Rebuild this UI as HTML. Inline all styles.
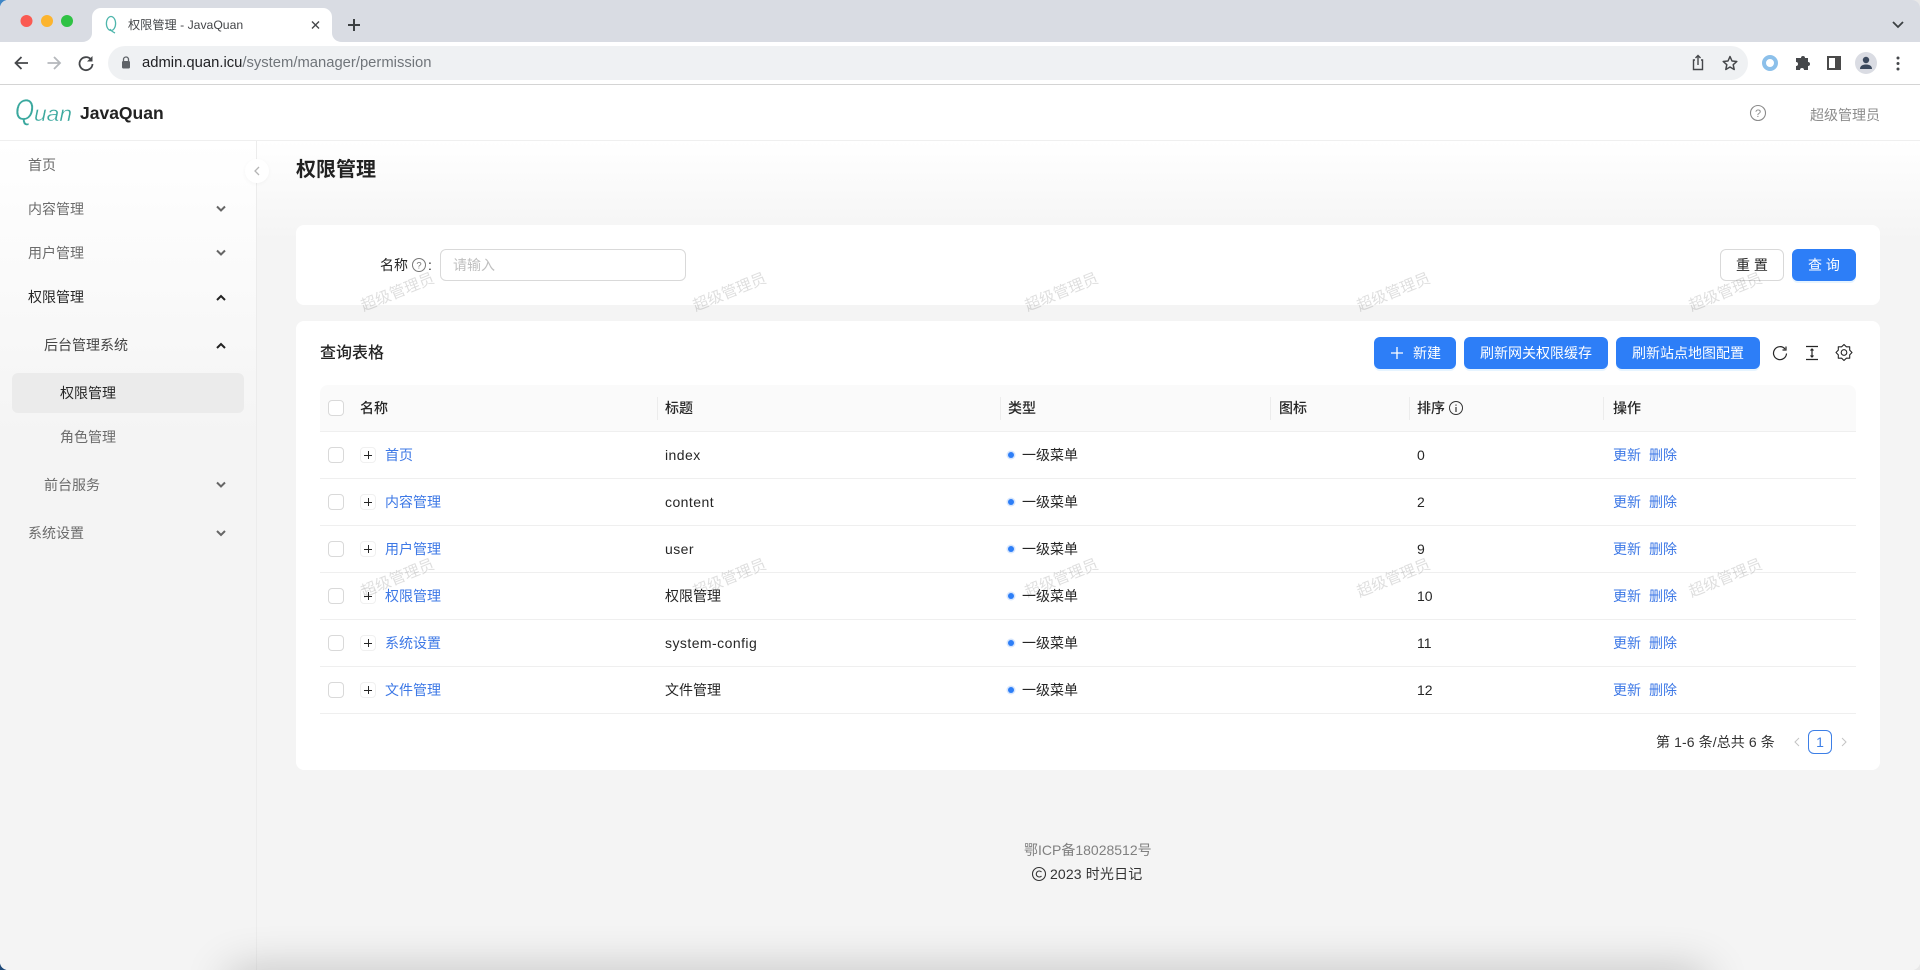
<!DOCTYPE html>
<html lang="zh-CN">
<head>
<meta charset="utf-8">
<title>权限管理 - JavaQuan</title>
<style>
*{box-sizing:border-box;margin:0;padding:0}
html,body{width:1920px;height:970px;overflow:hidden;background:#e8e8e8}
body{position:relative;font-family:"Liberation Sans","Noto Sans CJK SC",sans-serif;font-size:14px;color:#262626}
.c{position:absolute;width:10px;height:10px}
#win{position:absolute;left:0;top:0;width:1920px;height:970px;border-radius:8px;overflow:hidden;background:#f4f4f4}
.a{position:absolute}
.t{position:absolute;white-space:nowrap;line-height:20px;height:20px}
.btn{position:absolute;height:32px;border-radius:6px;background:#2d7ef7;color:#fff;text-align:center;line-height:32px;box-shadow:0 2px 0 rgba(5,145,255,.1);white-space:nowrap}
.nav{color:#6b6b6b}
.lnk{color:#3d78e6}
.ls{letter-spacing:.45px}
.sep{position:absolute;width:1px;height:23px;top:397px;background:#ececec}
.line{position:absolute;left:320px;width:1536px;height:1px;background:#efefef}
.cb{position:absolute;left:328px;width:16px;height:16px;border:1px solid #d9d9d9;border-radius:4px;background:#fff}
.ex{position:absolute;left:360px;width:16px;height:16px;border:1px solid #f0f0f0;border-radius:4px;background:#fff}
.ex:before{content:"";position:absolute;left:3px;top:6.5px;width:8px;height:1px;background:#262626}
.ex:after{content:"";position:absolute;left:6.5px;top:3px;width:1px;height:8px;background:#262626}
.dot{position:absolute;left:1008px;width:6px;height:6px;border-radius:50%;background:#2d7ef7;box-shadow:0 0 0 1.5px rgba(45,126,247,.2)}
.th{font-weight:500;color:#262626}
.wm{position:absolute;width:90px;height:24px;line-height:24px;text-align:center;font-size:15.5px;color:rgba(0,0,0,.13);transform:rotate(-22deg);white-space:nowrap;pointer-events:none}
svg.ic{position:absolute;left:0;top:0;width:1920px;height:970px;pointer-events:none}
</style>
</head>
<body>
<div class="c" style="left:0;top:0;background:#3f86c6"></div>
<div class="c" style="left:0;bottom:0;background:#1f4a7a"></div>
<div id="win">
  <!-- browser chrome -->
  <div class="a" style="left:0;top:0;width:1920px;height:42px;background:#d9dce3"></div>
  <div class="a" style="left:92px;top:8px;width:240px;height:34px;background:#fff;border-radius:9px 9px 0 0"></div>
  <div class="a" style="left:0;top:42px;width:1920px;height:42px;background:#fff"></div>
  <div class="a" style="left:0;top:84px;width:1920px;height:1px;background:#d4d4d4"></div>
  <div class="a" style="left:108px;top:46px;width:1640px;height:34px;border-radius:17px;background:#eff1f3"></div>
  <div class="t" style="left:128px;top:15px;font-size:12.2px;color:#45474a">权限管理 - JavaQuan</div>
  <div class="t" style="left:142px;top:53px;font-size:14.8px;color:#70757a"><span style="color:#202124">admin.quan.icu</span>/system/manager/permission</div>

  <!-- app header -->
  <div class="a" style="left:0;top:85px;width:1920px;height:55px;background:#fff"></div>
  <div class="a" style="left:0;top:140px;width:1920px;height:1px;background:#efefef"></div>
  <svg class="a" style="left:14px;top:96px" width="64" height="36" viewBox="0 0 64 36">
    <g font-family="Liberation Sans" font-style="italic" fill="#3aa89e" stroke="#fff" stroke-width=".35">
      <text transform="translate(1 24) scale(.82 1)" font-size="30">Q</text>
      <text x="20" y="25" font-size="21" textLength="38" lengthAdjust="spacingAndGlyphs">uan</text>
    </g>
  </svg>
  <div class="t" style="left:80px;top:102px;font-size:17.5px;line-height:22px;height:22px;font-weight:600;color:#222">JavaQuan</div>
  <div class="t" style="left:1810px;top:105px;color:#8c8c8c">超级管理员</div>

  <!-- sidebar -->
  <div class="a" style="left:0;top:141px;width:256px;height:829px;background:linear-gradient(#fff 0,#f4f4f4 300px)"></div>
  <div class="a" style="left:256px;top:141px;width:1px;height:829px;background:#ececec"></div>
  <div class="a" style="left:12px;top:373px;width:232px;height:40px;border-radius:6px;background:#ebebeb"></div>
  <div class="t nav" style="left:28px;top:155px">首页</div>
  <div class="t nav" style="left:28px;top:199px">内容管理</div>
  <div class="t nav" style="left:28px;top:243px">用户管理</div>
  <div class="t" style="left:28px;top:287px;color:#262626">权限管理</div>
  <div class="t" style="left:44px;top:335px;color:#444">后台管理系统</div>
  <div class="t" style="left:60px;top:383px;color:#262626">权限管理</div>
  <div class="t nav" style="left:60px;top:427px">角色管理</div>
  <div class="t nav" style="left:44px;top:475px">前台服务</div>
  <div class="t nav" style="left:28px;top:523px">系统设置</div>

  <!-- main -->
  <div class="a" style="left:257px;top:141px;width:1663px;height:829px;background:linear-gradient(#fff 0,#f4f4f4 100px)"></div>
  <div class="t" style="left:296px;top:156px;font-size:20px;line-height:28px;height:28px;font-weight:600;color:#222">权限管理</div>

  <!-- search card -->
  <div class="a" style="left:296px;top:225px;width:1584px;height:80px;border-radius:8px;background:#fff"></div>
  <div class="t" style="left:380px;top:255px;color:#262626">名称</div>
  <div class="t" style="left:428px;top:255px;color:#262626">:</div>
  <div class="a" style="left:440px;top:249px;width:246px;height:32px;border:1px solid #d9d9d9;border-radius:6px;background:#fff"></div>
  <div class="t" style="left:453px;top:255px;color:#bfbfbf">请输入</div>
  <div class="a" style="left:1720px;top:249px;width:64px;height:32px;border:1px solid #d9d9d9;border-radius:6px;background:#fff;text-align:center;line-height:30px;color:#262626">重 置</div>
  <div class="btn" style="left:1792px;top:249px;width:64px">查 询</div>

  <!-- table card -->
  <div class="a" style="left:296px;top:321px;width:1584px;height:449px;border-radius:8px;background:#fff"></div>
  <div class="t" style="left:320px;top:343px;font-size:16px;line-height:22px;height:22px;font-weight:500;color:#222">查询表格</div>
  <div class="btn" style="left:1374px;top:337px;width:82px;padding-left:24px">新建</div>
  <div class="btn" style="left:1464px;top:337px;width:144px">刷新网关权限缓存</div>
  <div class="btn" style="left:1616px;top:337px;width:144px">刷新站点地图配置</div>

  <div class="a" style="left:320px;top:385px;width:1536px;height:46px;border-radius:8px 8px 0 0;background:#fafafa"></div>
  <div class="sep" style="left:657px"></div>
  <div class="sep" style="left:1000px"></div>
  <div class="sep" style="left:1270px"></div>
  <div class="sep" style="left:1409px"></div>
  <div class="sep" style="left:1603px"></div>
  <div class="cb" style="top:400px"></div>
  <div class="t th" style="left:360px;top:398px">名称</div>
  <div class="t th" style="left:665px;top:398px">标题</div>
  <div class="t th" style="left:1008px;top:398px">类型</div>
  <div class="t th" style="left:1279px;top:398px">图标</div>
  <div class="t th" style="left:1417px;top:398px">排序</div>
  <div class="t th" style="left:1613px;top:398px">操作</div>

  <div class="line" style="top:431px"></div>
  <div class="line" style="top:478px"></div>
  <div class="line" style="top:525px"></div>
  <div class="line" style="top:572px"></div>
  <div class="line" style="top:619px"></div>
  <div class="line" style="top:666px"></div>
  <div class="line" style="top:713px"></div>

  <!-- row 1 -->
  <div class="cb" style="top:447px"></div><div class="ex" style="top:447px"></div>
  <div class="t lnk" style="left:385px;top:445px">首页</div>
  <div class="t ls" style="left:665px;top:445px">index</div>
  <div class="dot" style="top:452px"></div><div class="t" style="left:1022px;top:445px">一级菜单</div>
  <div class="t" style="left:1417px;top:445px">0</div>
  <div class="t lnk" style="left:1613px;top:445px">更新</div><div class="t lnk" style="left:1649px;top:445px">删除</div>
  <!-- row 2 -->
  <div class="cb" style="top:494px"></div><div class="ex" style="top:494px"></div>
  <div class="t lnk" style="left:385px;top:492px">内容管理</div>
  <div class="t ls" style="left:665px;top:492px">content</div>
  <div class="dot" style="top:499px"></div><div class="t" style="left:1022px;top:492px">一级菜单</div>
  <div class="t" style="left:1417px;top:492px">2</div>
  <div class="t lnk" style="left:1613px;top:492px">更新</div><div class="t lnk" style="left:1649px;top:492px">删除</div>
  <!-- row 3 -->
  <div class="cb" style="top:541px"></div><div class="ex" style="top:541px"></div>
  <div class="t lnk" style="left:385px;top:539px">用户管理</div>
  <div class="t ls" style="left:665px;top:539px">user</div>
  <div class="dot" style="top:546px"></div><div class="t" style="left:1022px;top:539px">一级菜单</div>
  <div class="t" style="left:1417px;top:539px">9</div>
  <div class="t lnk" style="left:1613px;top:539px">更新</div><div class="t lnk" style="left:1649px;top:539px">删除</div>
  <!-- row 4 -->
  <div class="cb" style="top:588px"></div><div class="ex" style="top:588px"></div>
  <div class="t lnk" style="left:385px;top:586px">权限管理</div>
  <div class="t" style="left:665px;top:586px">权限管理</div>
  <div class="dot" style="top:593px"></div><div class="t" style="left:1022px;top:586px">一级菜单</div>
  <div class="t" style="left:1417px;top:586px">10</div>
  <div class="t lnk" style="left:1613px;top:586px">更新</div><div class="t lnk" style="left:1649px;top:586px">删除</div>
  <!-- row 5 -->
  <div class="cb" style="top:635px"></div><div class="ex" style="top:635px"></div>
  <div class="t lnk" style="left:385px;top:633px">系统设置</div>
  <div class="t ls" style="left:665px;top:633px">system-config</div>
  <div class="dot" style="top:640px"></div><div class="t" style="left:1022px;top:633px">一级菜单</div>
  <div class="t" style="left:1417px;top:633px">11</div>
  <div class="t lnk" style="left:1613px;top:633px">更新</div><div class="t lnk" style="left:1649px;top:633px">删除</div>
  <!-- row 6 -->
  <div class="cb" style="top:682px"></div><div class="ex" style="top:682px"></div>
  <div class="t lnk" style="left:385px;top:680px">文件管理</div>
  <div class="t" style="left:665px;top:680px">文件管理</div>
  <div class="dot" style="top:687px"></div><div class="t" style="left:1022px;top:680px">一级菜单</div>
  <div class="t" style="left:1417px;top:680px">12</div>
  <div class="t lnk" style="left:1613px;top:680px">更新</div><div class="t lnk" style="left:1649px;top:680px">删除</div>

  <!-- pagination -->
  <div class="t" style="left:1656px;top:732px;color:#333;letter-spacing:.1px">第 1-6 条/总共 6 条</div>
  <div class="a" style="left:1808px;top:730px;width:24px;height:24px;border:1px solid #3d7fe6;border-radius:6px;text-align:center;line-height:22px;font-weight:500;color:#3d7fe6;background:#fff">1</div>

  <!-- footer -->
  <div class="t" style="left:1024px;top:840px;color:#808080">鄂ICP备18028512号</div>
  <div class="t" style="left:1050px;top:864px;color:#333;letter-spacing:.15px">2023 时光日记</div>

  <!-- icons -->
  <svg class="ic" viewBox="0 0 1920 970" fill="none">
    <!-- traffic lights -->
    <circle cx="26.5" cy="21" r="6" fill="#fa5a52"/>
    <circle cx="47" cy="21" r="6" fill="#fcb42e"/>
    <circle cx="67" cy="21" r="6" fill="#2fc244"/>
    <!-- tab flares -->
    <path d="M82 42C88 42 92 38 92 33V42Z M332 33C332 38 336 42 342 42H332Z" fill="#fff"/>
    <!-- favicon -->
    <ellipse cx="111" cy="23.5" rx="4.6" ry="7" stroke="#4fb6ac" stroke-width="1.3"/>
    <path d="M110 29C111 31 113 32 115 33" stroke="#4fb6ac" stroke-width="1.3"/>
    <!-- tab close and new tab -->
    <path d="M312 21.500L319 28.500M319 21.500L312 28.500" stroke="#45474a" stroke-width="1.400"/>
    <path d="M348 25H360M354 19V31" stroke="#3c4043" stroke-width="2"/>
    <!-- toolbar -->
    <path d="M28 63H16M21.500 57L15.500 63L21.500 69" stroke="#45474a" stroke-width="1.800"/>
    <path d="M47.500 63H60M54 57L60 63L54 69" stroke="#b5b8bc" stroke-width="1.800"/>
    <path d="M91 59.500A6.500 6.500 0 1 0 92.500 64" stroke="#45474a" stroke-width="1.800"/>
    <path d="M92.500 56V61.500H87Z" fill="#45474a"/>
    <rect x="122" y="61" width="8" height="7.500" rx="1.200" fill="#5f6368"/>
    <path d="M123.500 61V59.500A2.500 2.500 0 0 1 128.500 59.500V61" stroke="#5f6368" stroke-width="1.300"/>
    <path d="M1695 60H1693.500V69.500H1702.500V60H1701M1698 65V55.500M1695.500 58L1698 55.500L1700.500 58" stroke="#45474a" stroke-width="1.400"/>
    <path d="M1730 56.500L1732 61L1736.800 61.500L1733.200 64.700L1734.200 69.500L1730 67L1725.800 69.500L1726.800 64.700L1723.200 61.500L1728 61Z" stroke="#45474a" stroke-width="1.500" stroke-linejoin="round"/>
    <circle cx="1770" cy="63" r="6" stroke="#8cc0ea" stroke-width="4"/>
    <path d="M1798 58H1801A2 2 0 0 1 1805 58H1808V62A2 2 0 0 1 1808 66V70H1804A2 2 0 0 0 1800 70H1796V66A2 2 0 0 0 1796 62V58Z" fill="#45474a"/>
    <rect x="1827" y="56" width="14" height="14" fill="#4a4a4a"/>
    <rect x="1829" y="58" width="6" height="10" fill="#fff"/>
    <circle cx="1866" cy="63" r="11" fill="#dadce3"/>
    <circle cx="1866" cy="60" r="3.200" fill="#3c4a5e"/>
    <path d="M1860 69C1860 65.500 1863 64.500 1866 64.500S1872 65.500 1872 69Z" fill="#3c4a5e"/>
    <circle cx="1898" cy="58" r="1.500" fill="#45474a"/><circle cx="1898" cy="63.500" r="1.500" fill="#45474a"/><circle cx="1898" cy="69" r="1.500" fill="#45474a"/>
    <path d="M1893 22L1898 27L1903 22" stroke="#3c4043" stroke-width="1.800"/>
    <!-- header help -->
    <circle cx="1758" cy="113" r="7.500" stroke="#8c8c8c" stroke-width="1.100"/>
    <text x="1758" y="117" font-family="Liberation Sans" font-size="11" fill="#8c8c8c" text-anchor="middle">?</text>
    <!-- sidebar chevrons -->
    <g stroke="#666" stroke-width="2">
      <path d="M217 206.500L221 210.500L225 206.500"/><path d="M217 250.500L221 254.500L225 250.500"/><path d="M217 482.500L221 486.500L225 482.500"/><path d="M217 531L221 535L225 531"/>
    </g>
    <g stroke="#222" stroke-width="2">
      <path d="M217 300L221 296L225 300"/><path d="M217 348L221 344L225 348"/>
    </g>
    <!-- search label help -->
    <circle cx="419" cy="265" r="6.500" stroke="#777" stroke-width="1"/>
    <text x="419" y="268.500" font-family="Liberation Sans" font-size="9.500" fill="#777" text-anchor="middle">?</text>
    <!-- toolbar plus -->
    <path d="M1391 353H1403M1397 347V359" stroke="#fff" stroke-width="1.300"/>
    <!-- table tools -->
    <path d="M1785 349A6.500 6.500 0 1 0 1786.500 353.500" stroke="#262626" stroke-width="1.200"/>
    <path d="M1786 346.500V350H1782.500" stroke="#262626" stroke-width="1.200"/>
    <path d="M1806 346.500H1818M1806 359.500H1818M1812 349V357M1810.500 350.500L1812 349L1813.500 350.500M1810.500 355.500L1812 357L1813.500 355.500" stroke="#262626" stroke-width="1.200"/>
    <path d="M1852 352.500L1849.700 350.100L1849.700 346.800L1846.400 346.800L1844 344.500L1841.600 346.800L1838.300 346.800L1838.300 350.100L1836 352.500L1838.300 354.900L1838.300 358.200L1841.600 358.200L1844 360.500L1846.400 358.200L1849.700 358.200L1849.700 354.900Z" stroke="#262626" stroke-width="1.100" stroke-linejoin="round"/>
    <circle cx="1844" cy="352.500" r="2.800" stroke="#262626" stroke-width="1.100"/>
    <!-- sort info -->
    <circle cx="1456" cy="408" r="6.500" stroke="#333" stroke-width="1"/>
    <path d="M1456 407V412M1456 404.500V405.800" stroke="#333" stroke-width="1.200"/>
    <!-- pagination chevrons -->
    <path d="M1799 738L1795 742L1799 746" stroke="#c4c4c4" stroke-width="1"/>
    <path d="M1842 738L1846 742L1842 746" stroke="#c4c4c4" stroke-width="1"/>
    <!-- copyright -->
    <circle cx="1039" cy="874" r="6.500" stroke="#333" stroke-width="1.100"/>
    <path d="M1041.500 872A3 3 0 1 0 1041.500 876" stroke="#333" stroke-width="1.100"/>
  </svg>

  <!-- collapse button -->
  <div class="a" style="left:245px;top:159px;width:24px;height:24px;border-radius:50%;background:#fff;box-shadow:0 1px 4px rgba(0,0,0,.04)"></div>
  <svg class="a" style="left:245px;top:159px" width="24" height="24" fill="none"><path d="M14 8L10 12L14 16" stroke="#b5b5b5" stroke-width="1.300"/></svg>

  <!-- watermarks -->
  <div class="wm" style="left:353px;top:281px">超级管理员</div>
  <div class="wm" style="left:685px;top:281px">超级管理员</div>
  <div class="wm" style="left:1017px;top:281px">超级管理员</div>
  <div class="wm" style="left:1349px;top:281px">超级管理员</div>
  <div class="wm" style="left:1681px;top:281px">超级管理员</div>
  <div class="wm" style="left:353px;top:567px">超级管理员</div>
  <div class="wm" style="left:685px;top:567px">超级管理员</div>
  <div class="wm" style="left:1017px;top:567px">超级管理员</div>
  <div class="wm" style="left:1349px;top:567px">超级管理员</div>
  <div class="wm" style="left:1681px;top:567px">超级管理员</div>

  <!-- bottom window shadow -->
  <div class="a" style="left:230px;top:972px;width:1475px;height:40px;background:#999;box-shadow:0 0 46px rgba(0,0,0,.24)"></div>
</div>
</body>
</html>
